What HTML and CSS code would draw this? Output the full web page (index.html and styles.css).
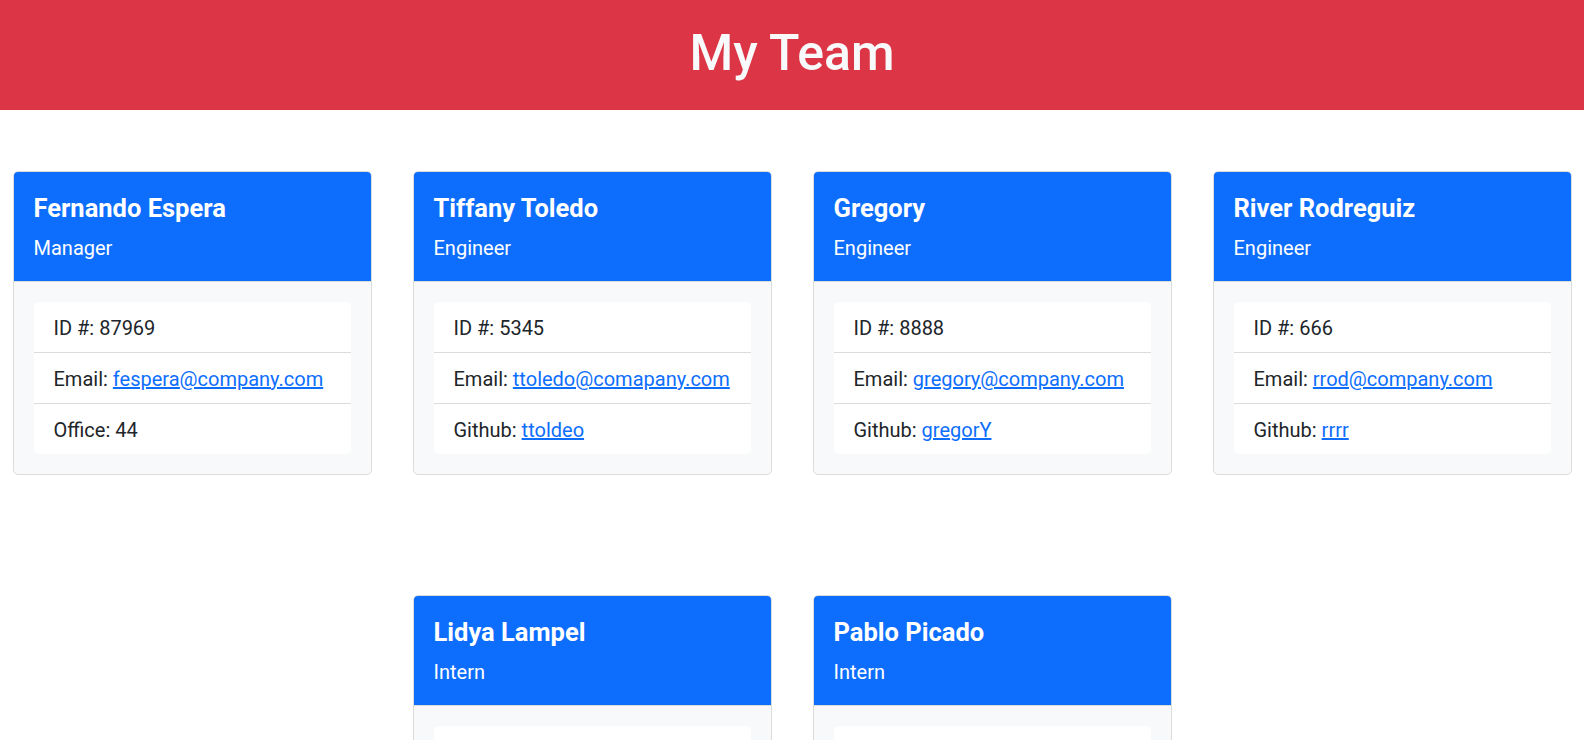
FILE: index.html
```html
<!DOCTYPE html>
<html lang="en">
<head>
<meta charset="utf-8">
<title>My Team</title>
<link rel="stylesheet" href="styles.css">
</head>
<body>
<header class="banner">
  <h1 class="banner-title">My Team</h1>
</header>
<main class="team">
  <div class="card">
    <div class="card-header">
      <h5 class="card-name">Fernando Espera</h5>
      <h6 class="card-role">Manager</h6>
    </div>
    <div class="card-body">
      <ul class="list">
        <li class="list-item">ID #: 87969</li>
        <li class="list-item">Email: <a href="#">fespera@company.com</a></li>
        <li class="list-item">Office: 44</li>
      </ul>
    </div>
  </div>
  <div class="card">
    <div class="card-header">
      <h5 class="card-name">Tiffany Toledo</h5>
      <h6 class="card-role">Engineer</h6>
    </div>
    <div class="card-body">
      <ul class="list">
        <li class="list-item">ID #: 5345</li>
        <li class="list-item">Email: <a href="#">ttoledo@comapany.com</a></li>
        <li class="list-item">Github: <a href="#">ttoldeo</a></li>
      </ul>
    </div>
  </div>
  <div class="card">
    <div class="card-header">
      <h5 class="card-name">Gregory</h5>
      <h6 class="card-role">Engineer</h6>
    </div>
    <div class="card-body">
      <ul class="list">
        <li class="list-item">ID #: 8888</li>
        <li class="list-item">Email: <a href="#">gregory@company.com</a></li>
        <li class="list-item">Github: <a href="#">gregorY</a></li>
      </ul>
    </div>
  </div>
  <div class="card">
    <div class="card-header">
      <h5 class="card-name">River Rodreguiz</h5>
      <h6 class="card-role">Engineer</h6>
    </div>
    <div class="card-body">
      <ul class="list">
        <li class="list-item">ID #: 666</li>
        <li class="list-item">Email: <a href="#">rrod@company.com</a></li>
        <li class="list-item">Github: <a href="#">rrrr</a></li>
      </ul>
    </div>
  </div>
  <div class="card">
    <div class="card-header">
      <h5 class="card-name">Lidya Lampel</h5>
      <h6 class="card-role">Intern</h6>
    </div>
    <div class="card-body">
      <ul class="list">
        <li class="list-item">ID #: 12</li>
        <li class="list-item">Email: <a href="#">llampel@company.com</a></li>
        <li class="list-item">School: UCLA</li>
      </ul>
    </div>
  </div>
  <div class="card">
    <div class="card-header">
      <h5 class="card-name">Pablo Picado</h5>
      <h6 class="card-role">Intern</h6>
    </div>
    <div class="card-body">
      <ul class="list">
        <li class="list-item">ID #: 13</li>
        <li class="list-item">Email: <a href="#">ppicado@company.com</a></li>
        <li class="list-item">School: UCSD</li>
      </ul>
    </div>
  </div>
</main>
</body>
</html>
```
FILE: styles.css
```css
* { box-sizing: border-box; }

html, body {
  margin: 0;
  padding: 0;
}

body {
  font-family: Roboto, "Liberation Sans", sans-serif;
  font-size: 20px;
  line-height: 1.5;
  color: #212529;
  background: #fff;
}

.banner {
  background: #dc3545;
  height: 110px;
  display: flex;
  justify-content: center;
  align-items: flex-start;
}

.banner-title {
  margin: 0;
  padding-top: 23px;
  font-size: 50px;
  line-height: 60px;
  font-weight: 500;
  color: #f8f9fa;
}

.team {
  display: flex;
  flex-wrap: wrap;
  justify-content: center;
  column-gap: 41px;
  row-gap: 120px;
  padding-top: 61px;
  padding-bottom: 60px;
}

.card {
  width: 359px;
  border: 1px solid #dcdcdd;
  border-radius: 5px;
  background: #f8f9fa;
  overflow: hidden;
}

.card-header {
  background: #0d6efd;
  color: #fff;
  padding: 21px 20px 0;
  height: 110px;
  border-bottom: 1px solid #dcdcdd;
}

.card-name {
  margin: 0 0 13px;
  font-size: 25.5px;
  line-height: 30px;
  font-weight: 700;
}

.card-role {
  margin: 0;
  font-size: 20px;
  line-height: 24px;
  font-weight: 400;
}

.card-body {
  padding: 20px;
}

.list {
  list-style: none;
  margin: 0;
  padding: 0;
  background: #fff;
  border-radius: 5px;
}

.list-item {
  padding: 11px 20px 9px;
  line-height: 30px;
}

.list-item + .list-item {
  border-top: 1px solid #dcdcdd;
}

.list-item a {
  color: #0d6efd;
  text-decoration: underline;
}
```
